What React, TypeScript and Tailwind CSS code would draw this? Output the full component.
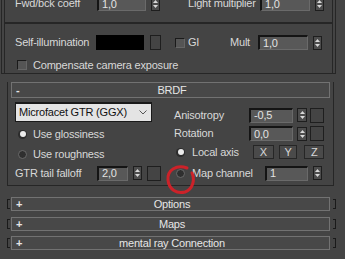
const Spinner = ({ w }: { w: string }) => (
  <div className={`flex h-[14px] w-[9px] items-center justify-center border border-[#1e1e1e] bg-[#4c4c4c] ${w}`}>
    <svg width="7" height="12" viewBox="0 0 7 12">
      <polygon points="1,5 3.5,2 6,5" fill="#d8d8d8" />
      <polygon points="1,7 3.5,10 6,7" fill="#d8d8d8" />
    </svg>
  </div>
);

const Field = ({ value, w }: { value: string; w: string }) => (
  <div
    className={`flex h-[15px] items-center border-t-2 border-l-2 border-r border-b border-t-[#141414] border-l-[#141414] border-r-[#6a6a6a] border-b-[#6a6a6a] bg-[#585858] pl-[3px] text-[#e2e2e2] ${w}`}
  >
    {value}
  </div>
);

const Square = ({ w }: { w: string }) => (
  <div className={`h-[15px] border border-[#1e1e1e] bg-[#444444] ${w}`} />
);

const Radio = ({ on }: { on?: boolean }) =>
  on ? (
    <div className="flex h-[9px] w-[9px] items-center justify-center rounded-full bg-[#2c2c2c]">
      <div className="h-[6px] w-[6px] rounded-full bg-[#ececec]" />
    </div>
  ) : (
    <div className="h-[9px] w-[9px] rounded-full border border-[#6a6a6a] bg-[#2f2f2f]" />
  );

const Check = () => (
  <div className="h-[10px] w-[10px] border border-t-[#1a1a1a] border-l-[#1a1a1a] border-r-[#666] border-b-[#666] bg-[#555555]" />
);

const Header = ({ sign, title }: { sign: string; title: string }) => (
  <div className="grid h-full w-full grid-cols-1 border border-[#727272] bg-[#484848] text-[11px] text-[#e6e6e6]">
    <span className="col-start-1 row-start-1 self-center pl-[4px] font-bold leading-none">{sign}</span>
    <span className="col-start-1 row-start-1 self-center pl-[3px] text-center leading-none">{title}</span>
  </div>
);

const Rollout = ({ title, mt }: { title: string; mt: string }) => (
  <div className={`flex items-center ${mt}`}>
    <div className="ml-[7px] h-[10px] w-[3px] border-y border-l border-[#1a1a1a]" />
    <div className="ml-px h-[14px] w-[319px]">
      <Header sign="+" title={title} />
    </div>
    <div className="ml-[3px] h-[10px] w-[3px] border-y border-r border-[#1a1a1a]" />
  </div>
);

export default function App() {
  return (
    <div className="relative h-[259px] w-[345px] overflow-hidden bg-[#444444] font-['Liberation_Sans',Arial,sans-serif] text-[11px] tracking-[-0.2px] text-[#d8d8d8]">
      {/* end of the previous rollout */}
      <div className="ml-px h-[78px] w-[335px] border-x border-b border-[#262626]">
        <div className="mx-[2px] h-full border-x border-[#262626]">
          <div className="-mt-[4px] flex h-[15px] items-center">
            <span className="w-[82px] pl-[10px]">Fwd/bck coeff</span>
            <span className="w-[10px]" />
            <Field value="1,0" w="w-[49px]" />
            <Spinner w="ml-[5px]" />
            <span className="ml-[28px] w-[72px]">Light multiplier</span>
            <Field value="1,0" w="w-[50px]" />
            <Spinner w="ml-[5px]" />
          </div>
          <div className="mt-[11px] h-[2px] bg-[#262626]" />
          <div className="mt-[11px] flex h-[15px] items-center">
            <span className="w-[91px] pl-[10px]">Self-illumination</span>
            <div className="h-[15px] w-[48px] bg-black" />
            <Square w="ml-[6px] w-[11px]" />
            <div className="ml-[14px]">
              <Check />
            </div>
            <span className="ml-[3px] w-[42px]">GI</span>
            <span className="w-[28px]">Mult</span>
            <Field value="1,0" w="w-[50px]" />
            <Spinner w="ml-[5px]" />
          </div>
          <div className="mt-[7px] flex items-center">
            <div className="ml-[12px]">
              <Check />
            </div>
            <span className="ml-[6px]">Compensate camera exposure</span>
          </div>
        </div>
      </div>

      {/* BRDF rollout */}
      <div className="mt-[15px] ml-[7px] w-[327px] border-x border-b border-[#262626] pb-[5px]">
        <div className="-mt-[7px] mx-[3px] h-[16px]">
          <Header sign="-" title="BRDF" />
        </div>
        <div className="flex">
          <div className="ml-[7px] mt-[4px] flex w-[146px] flex-col">
            <div className="flex h-[20px] w-[137px] items-center justify-between border border-t-2 border-[#1a1a1a] bg-[#e4e4e4] pl-[3px] pr-[4px] text-[#111]">
              <span>Microfacet GTR (GGX)</span>
              <svg width="8" height="5" viewBox="0 0 8 5">
                <polyline points="0.5,0.5 4,4 7.5,0.5" fill="none" stroke="#555" strokeWidth="1" />
              </svg>
            </div>
            <div className="mt-[5px] flex h-[14px] items-center">
              <div className="ml-[3px]">
                <Radio on />
              </div>
              <span className="ml-[6px]">Use glossiness</span>
            </div>
            <div className="mt-[6px] flex h-[14px] items-center">
              <div className="ml-[3px]">
                <Radio />
              </div>
              <span className="ml-[6px]">Use roughness</span>
            </div>
            <div className="mt-[5px] flex h-[14px] items-center">
              <span className="w-[82px]">GTR tail falloff</span>
              <Field value="2,0" w="w-[31px]" />
              <Spinner w="ml-[5px]" />
              <Square w="ml-[5px] w-[14px]" />
            </div>
          </div>

          <div className="ml-[13px] mt-[10px] flex w-[150px] flex-col">
            <div className="flex h-[14px] items-center">
              <span className="w-[75px]">Anisotropy</span>
              <Field value="-0,5" w="w-[44px]" />
              <Spinner w="ml-[4px] w-[10px]" />
              <Square w="ml-[3px] w-[14px]" />
            </div>
            <div className="mt-[4px] flex h-[15px] items-center">
              <span className="w-[75px]">Rotation</span>
              <Field value="0,0" w="w-[44px]" />
              <Spinner w="ml-[4px] w-[10px]" />
              <Square w="ml-[3px] w-[14px]" />
            </div>
            <div className="mt-[4px] flex h-[14px] items-center">
              <div className="ml-[2px]">
                <Radio on />
              </div>
              <span className="ml-[7px] w-[66px]">Local axis</span>
              <div className="flex h-[14px] w-[22px] items-center justify-center border border-[#262626] bg-[#4a4a4a]">X</div>
              <div className="ml-[5px] flex h-[14px] w-[20px] items-center justify-center border border-[#262626] bg-[#4a4a4a]">Y</div>
              <div className="ml-[7px] flex h-[14px] w-[21px] items-center justify-center border border-[#262626] bg-[#4a4a4a]">Z</div>
            </div>
            <div className="mt-[7px] flex h-[14px] items-center">
              <div className="ml-[2px]">
                <Radio />
              </div>
              <span className="ml-[7px] w-[73px]">Map channel</span>
              <Field value="1" w="w-[43px]" />
              <Spinner w="ml-[5px] w-[8px]" />
            </div>
          </div>
        </div>
      </div>

      <Rollout title="Options" mt="mt-[11px]" />
      <Rollout title="Maps" mt="mt-[6px]" />
      <Rollout title="mental ray Connection" mt="mt-[5px]" />

      {/* hand-drawn red mark */}
      <svg className="pointer-events-none absolute left-[161px] top-[160px]" width="40" height="40" viewBox="0 0 40 40">
        <path
          d="M 26 8 C 16 4, 6 10, 7 20 C 8 30, 16 34, 24 32 C 32 29, 34 20, 31 13"
          fill="none"
          stroke="#cc2229"
          strokeWidth="3"
          strokeLinecap="round"
        />
      </svg>
    </div>
  );
}
